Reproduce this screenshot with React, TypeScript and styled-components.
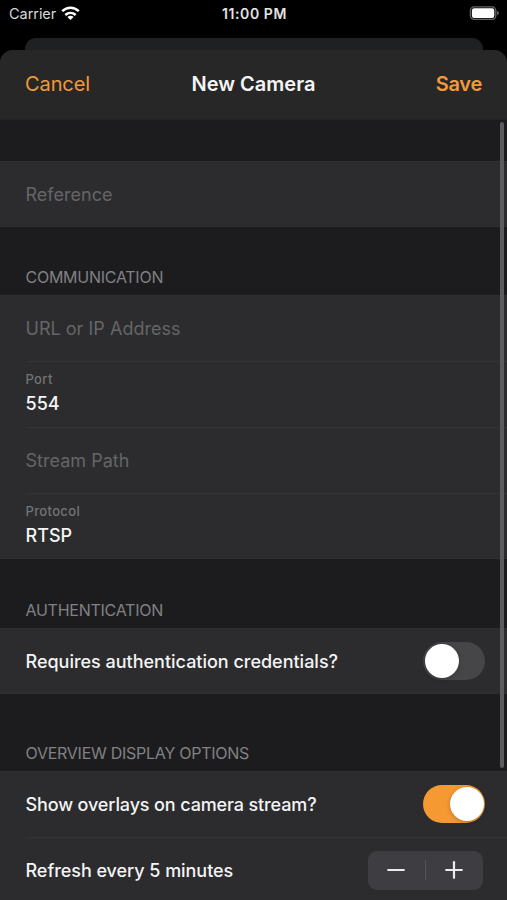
import React, { useState } from "react";
import styled, { createGlobalStyle } from "styled-components";

const Global = createGlobalStyle`
  * { box-sizing: border-box; }
  html, body { margin: 0; background: #000; }
  body { height: 900px; overflow: hidden; font-family: Inter, "Liberation Sans", sans-serif; }
  button { font-family: inherit; background: none; border: 0; padding: 0; margin: 0; }
`;

const Screen = styled.div`
  width: 507px;
  height: 900px;
  display: flex;
  flex-direction: column;
  overflow: hidden;
  background: #000;
  color: #f4f4f5;
`;

const StatusBar = styled.header`
  flex: none;
  height: 38px;
  display: grid;
  grid-template-columns: 1fr auto 1fr;
  padding: 5px 7px 0 9px;
  line-height: 18px;
`;

const Carrier = styled.div`
  display: flex;
  gap: 5px;
  font-size: 14.5px;
  letter-spacing: -0.05px;
  color: #d8d8d8;
`;

const Clock = styled.div`
  font-size: 14px;
  font-weight: 600;
  letter-spacing: 0.6px;
  color: #e4e4e4;
`;

const Battery = styled.div`
  display: flex;
  justify-content: flex-end;
`;

const BackCard = styled.div`
  flex: none;
  height: 12px;
  margin: 0 24px 0 25px;
  border-radius: 11px 11px 0 0;
  background: #1f2021;
`;

const Sheet = styled.main`
  flex: 1;
  min-height: 0;
  border-radius: 13px 13px 0 0;
  background: #1c1c1e;
  overflow: hidden;
  display: flex;
  flex-direction: column;
`;

const NavBar = styled.div`
  flex: none;
  height: 70px;
  padding: 0 25px 1px 25px;
  background: #272728;
  border-bottom: 1px solid #232324;
  display: grid;
  grid-template-columns: 1fr auto 1fr;
  align-items: center;
`;

const NavAction = styled.button<{ $primary?: boolean }>`
  justify-self: ${(p) => (p.$primary ? "end" : "start")};
  color: #f19a38;
  font-size: 20px;
  font-weight: ${(p) => (p.$primary ? 600 : 400)};
  letter-spacing: ${(p) => (p.$primary ? "-0.25px" : "-0.1px")};
`;

const Title = styled.h1`
  margin: 0;
  font-size: 20px;
  font-weight: 600;
  letter-spacing: 0;
  color: #f4f4f4;
`;

const Body = styled.div`
  position: relative;
  flex: 1;
  min-height: 0;
`;

const ScrollThumb = styled.div`
  position: absolute;
  top: 2px;
  right: 3px;
  width: 4px;
  height: 646px;
  border-radius: 2px;
  background: #5c5c5e;
`;

const SectionHeader = styled.h2<{ $height: number }>`
  height: ${(p) => p.$height}px;
  margin: 0;
  padding: 0 25.5px 8px;
  display: flex;
  align-items: flex-end;
  font-size: 16px;
  line-height: 19px;
  font-weight: 400;
  letter-spacing: -0.26px;
  color: #818184;
`;

const Group = styled.section`
  background: #2c2c2e;
  box-shadow: inset 0 1px #303032, inset 0 -1px #303032;
`;

const Row = styled.div`
  height: 66px;
  padding-left: 25.5px;
`;

const RowInner = styled.div<{ $divided?: boolean }>`
  height: 100%;
  padding: 0 22px 1px 0;
  display: flex;
  align-items: center;
  justify-content: space-between;
  border-top: 1px solid ${(p) => (p.$divided ? "#343436" : "transparent")};
`;

const Placeholder = styled.span`
  font-size: 18px;
  letter-spacing: 0.02px;
  color: #656568;
`;

const Label = styled.span<{ $tracking?: number }>`
  font-size: 18px;
  font-weight: 500;
  letter-spacing: ${(p) => p.$tracking ?? -0.05}px;
`;

const Field = styled.div`
  display: flex;
  flex-direction: column;
  padding-bottom: 3px;
`;

const Caption = styled.span`
  font-size: 13px;
  font-weight: 500;
  line-height: 18px;
  letter-spacing: 0.35px;
  color: #737376;
`;

const Value = styled.span`
  margin-top: 4px;
  font-size: 18px;
  font-weight: 500;
  line-height: 24px;
`;

const Toggle = styled.button<{ $on: boolean }>`
  width: 62px;
  height: 38px;
  padding: 2px 1.5px;
  border-radius: 19px;
  background: ${(p) => (p.$on ? "#f59a32" : "#464649")};
  display: flex;
  justify-content: ${(p) => (p.$on ? "flex-end" : "flex-start")};
`;

const Knob = styled.span`
  width: 34px;
  height: 34px;
  border-radius: 50%;
  background: #fff;
  box-shadow: 0 1px 4px rgba(0, 0, 0, 0.25);
`;

const Stepper = styled.div`
  width: 115px;
  height: 39px;
  margin-right: 2.5px;
  border-radius: 9px;
  background: #3e3e42;
  display: grid;
  grid-template-columns: 1fr 1px 1fr;
  align-items: center;
`;

const StepButton = styled.button`
  height: 39px;
  display: flex;
  align-items: center;
  justify-content: center;
`;

const StepDivider = styled.span`
  height: 20px;
  background: #545458;
`;

const WifiIcon = () => (
  <svg width="19" height="18" viewBox="0 0 19 18" fill="none" stroke="#fff" strokeWidth="2.5">
    <path d="M1.2 6.2C6 1.6 13 1.6 17.8 6.2" />
    <path d="M4.3 10C7.4 7.2 11.6 7.2 14.7 10" />
    <path d="M9.5 15L6.4 12C8.3 10.4 10.7 10.4 12.6 12Z" fill="#fff" stroke="none" />
  </svg>
);

const BatteryIcon = () => (
  <svg width="31" height="18" viewBox="0 0 31 18">
    <rect x="1.4" y="1.8" width="25.4" height="12.6" rx="3.8" fill="none" stroke="#66666a" strokeWidth="1.3" />
    <rect x="2.9" y="3.3" width="22.4" height="9.6" rx="2.2" fill="#fff" />
    <path d="M28.2 6.1C30.3 6.8 30.3 9.5 28.2 10.2Z" fill="#77777a" />
  </svg>
);

const StepIcon = ({ plus }: { plus?: boolean }) => (
  <svg width="18" height="18" viewBox="0 0 18 18" stroke="#ececee" strokeWidth="2.2" strokeLinecap="round">
    <path d="M1.2 9H16.8" />
    {plus && <path d="M9 1.2V16.8" />}
  </svg>
);

const EmptyField = ({ label, divided }: { label: string; divided?: boolean }) => (
  <Row>
    <RowInner $divided={divided}>
      <Placeholder>{label}</Placeholder>
    </RowInner>
  </Row>
);

const FilledField = ({ label, value }: { label: string; value: string }) => (
  <Row>
    <RowInner $divided>
      <Field>
        <Caption>{label}</Caption>
        <Value>{value}</Value>
      </Field>
    </RowInner>
  </Row>
);

const Switch = ({ initial, label }: { initial: boolean; label: string }) => {
  const [on, setOn] = useState(initial);
  return (
    <Toggle $on={on} role="switch" aria-checked={on} aria-label={label} onClick={() => setOn(!on)}>
      <Knob />
    </Toggle>
  );
};

export default function App() {
  const [minutes, setMinutes] = useState(5);
  return (
    <>
      <Global />
      <Screen>
        <StatusBar>
          <Carrier>
            Carrier
            <WifiIcon />
          </Carrier>
          <Clock>11:00 PM</Clock>
          <Battery>
            <BatteryIcon />
          </Battery>
        </StatusBar>
        <BackCard />
        <Sheet>
          <NavBar>
            <NavAction>Cancel</NavAction>
            <Title>New Camera</Title>
            <NavAction $primary>Save</NavAction>
          </NavBar>
          <Body>
            <SectionHeader $height={41} />
            <Group>
              <EmptyField label="Reference" />
            </Group>
            <SectionHeader $height={68}>COMMUNICATION</SectionHeader>
            <Group>
              <EmptyField label="URL or IP Address" />
              <FilledField label="Port" value="554" />
              <EmptyField label="Stream Path" divided />
              <FilledField label="Protocol" value="RTSP" />
            </Group>
            <SectionHeader $height={69}>AUTHENTICATION</SectionHeader>
            <Group>
              <Row>
                <RowInner>
                  <Label $tracking={-0.01}>Requires authentication credentials?</Label>
                  <Switch initial={false} label="Requires authentication credentials" />
                </RowInner>
              </Row>
            </Group>
            <SectionHeader $height={77}>OVERVIEW DISPLAY OPTIONS</SectionHeader>
            <Group>
              <Row>
                <RowInner>
                  <Label $tracking={-0.13}>Show overlays on camera stream?</Label>
                  <Switch initial label="Show overlays on camera stream" />
                </RowInner>
              </Row>
              <Row>
                <RowInner $divided>
                  <Label>Refresh every {minutes} minutes</Label>
                  <Stepper>
                    <StepButton aria-label="Decrease" onClick={() => setMinutes(Math.max(1, minutes - 1))}>
                      <StepIcon />
                    </StepButton>
                    <StepDivider />
                    <StepButton aria-label="Increase" onClick={() => setMinutes(minutes + 1)}>
                      <StepIcon plus />
                    </StepButton>
                  </Stepper>
                </RowInner>
              </Row>
            </Group>
            <ScrollThumb />
          </Body>
        </Sheet>
      </Screen>
    </>
  );
}
